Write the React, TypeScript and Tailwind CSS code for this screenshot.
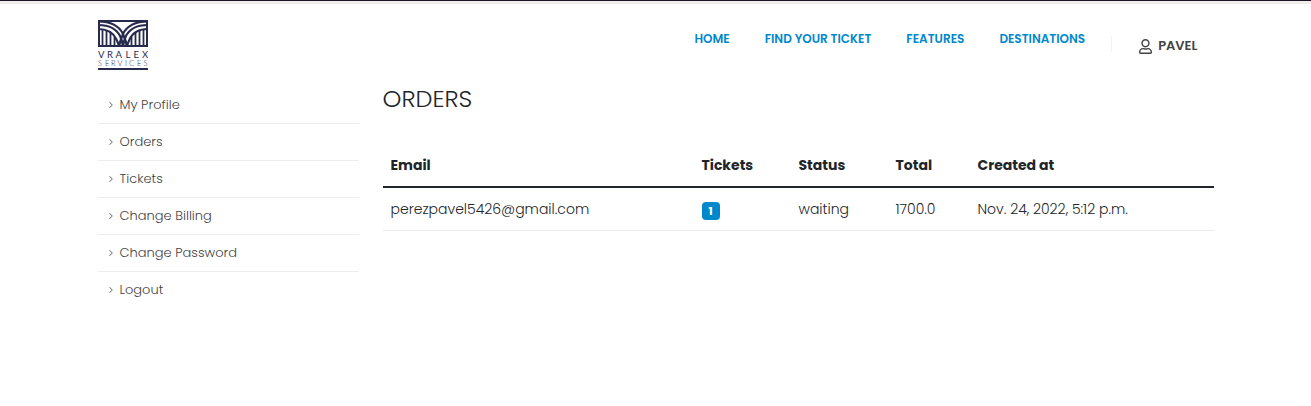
import { ChevronRight } from "lucide-react";
import { FaRegUser } from "react-icons/fa";

const navLinks = ["Home", "Find your ticket", "Features", "Destinations"];

const menu = ["My Profile", "Orders", "Tickets", "Change Billing", "Change Password", "Logout"];

const orders = [
  {
    email: "perezpavel5426@gmail.com",
    tickets: 1,
    status: "waiting",
    total: "1700.0",
    created: "Nov. 24, 2022, 5:12 p.m.",
  },
];

function Logo() {
  return (
    <svg viewBox="0 0 50 50" className="block size-[50px]" role="img" aria-label="Vralex Services">
      <defs>
        <clipPath id="frame">
          <rect x="0" y="0" width="50" height="27" />
        </clipPath>
        <clipPath id="pillars">
          <path d="M0 9C10 9 18 14 22 27H0ZM50 9C40 9 32 14 28 27H50Z" />
        </clipPath>
      </defs>
      <g clipPath="url(#frame)" fill="none" stroke="#262b4d">
        <g strokeWidth="2.2">
          <path d="M0 1.5C12 1.5 21 5.5 25 14C27 18.5 28.5 23 29 27" />
          <path d="M0 5C11 5 19 9 22.5 17C24 20.5 24.7 24 25 27" />
          <path d="M0 9C9 9 15.500 13 18.500 19.500C20 22.500 20.700 25 21 27" />
          <path d="M50 1.5C38 1.5 29 5.5 25 14C23 18.5 21.5 23 21 27" />
          <path d="M50 5C39 5 31 9 27.5 17C26 20.5 25.3 24 25 27" />
          <path d="M50 9C41 9 34.500 13 31.500 19.500C30 22.500 29.300 25 29 27" />
        </g>
        <path
          clipPath="url(#pillars)"
          d="M4.500 0V27M8.500 0V27M12.500 0V27M16.500 0V27M33.500 0V27M37.500 0V27M41.500 0V27M45.500 0V27"
          strokeWidth="1.8"
        />
        <rect x="1" y="1" width="48" height="25" strokeWidth="2" />
      </g>
      <g fill="#262b4d" fontFamily="Lato, sans-serif">
        <text y="37.5" fontSize="9.5" x="0 9 17.5 27.5 35.5 44">VRALEX</text>
        <text y="45.700" fontSize="7.5" fontWeight="300" x="0 7 13 19.5 27 31 39 45.5">SERVICES</text>
      </g>
      <rect x="0" y="48" width="50" height="2" fill="#262b4d" />
    </svg>
  );
}

export default function App() {
  return (
    <div className="border-t border-[#1c1624] bg-white font-['Poppins','Inter',sans-serif] text-sm text-[#212529]">
      <div className="h-[3px] bg-[#f1edef]" />
      <div className="mx-auto max-w-[1140px] px-3">
        <header className="flex items-start justify-between pt-4 pr-4">
          <a href="#">
            <Logo />
          </a>
          <div className="flex items-start">
            <nav className="flex gap-[35px] pt-[9px] text-xs leading-5 font-semibold text-[#0088cc] uppercase">
              {navLinks.map((label) => (
                <a key={label} href="#" className="whitespace-nowrap">
                  {label}
                </a>
              ))}
            </nav>
            <div className="mt-4 ml-[26px] h-4 border-l border-[#f2f2f2]" />
            <a
              href="#"
              className="ml-[27px] flex items-center gap-[6px] pt-4 text-[13px] leading-5 font-semibold text-[#444444]"
            >
              <FaRegUser className="h-[15px] w-[13px]" />
              PAVEL
            </a>
          </div>
        </header>

        <div className="flex gap-6 pt-[17px]">
          <aside className="w-[261px] shrink-0">
            <ul className="text-[13px] leading-5 font-light text-[#444444]">
              {menu.map((label) => (
                <li key={label} className="border-b border-[#ededed] last:border-b-0">
                  <a href="#" className="flex items-center gap-1 py-2 pl-2">
                    <ChevronRight className="size-[10px]" color="#777777" strokeWidth={2.5} />
                    {label}
                  </a>
                </li>
              ))}
            </ul>
          </aside>

          <main className="min-w-0 flex-1">
            <h1 className="text-2xl leading-6 font-light">ORDERS</h1>
            <table className="mt-[31px] w-full table-fixed text-left">
              <thead>
                <tr className="border-b-2 border-[#212529] leading-5">
                  <th className="w-[311px] px-2 pt-[13px] pb-[11px] font-bold">Email</th>
                  <th className="w-[97px] px-2 pt-[13px] pb-[11px] font-bold">Tickets</th>
                  <th className="w-[97px] px-2 pt-[13px] pb-[11px] font-bold">Status</th>
                  <th className="w-[82px] px-2 pt-[13px] pb-[11px] font-bold">Total</th>
                  <th className="px-2 pt-[13px] pb-[11px] font-bold">Created at</th>
                </tr>
              </thead>
              <tbody>
                {orders.map((order) => (
                  <tr key={order.email} className="border-b border-[#ededed] leading-5 font-light">
                    <td className="px-2 py-[11px]">{order.email}</td>
                    <td className="px-2 pt-[13px] pb-[9px]">
                      <span className="block w-[18px] rounded bg-[#0088cc] text-center text-[11px] leading-[18px] font-bold text-white">
                        {order.tickets}
                      </span>
                    </td>
                    <td className="px-2 py-[11px]">{order.status}</td>
                    <td className="px-2 py-[11px]">{order.total}</td>
                    <td className="px-2 py-[11px]">{order.created}</td>
                  </tr>
                ))}
              </tbody>
            </table>
          </main>
        </div>
      </div>
    </div>
  );
}
